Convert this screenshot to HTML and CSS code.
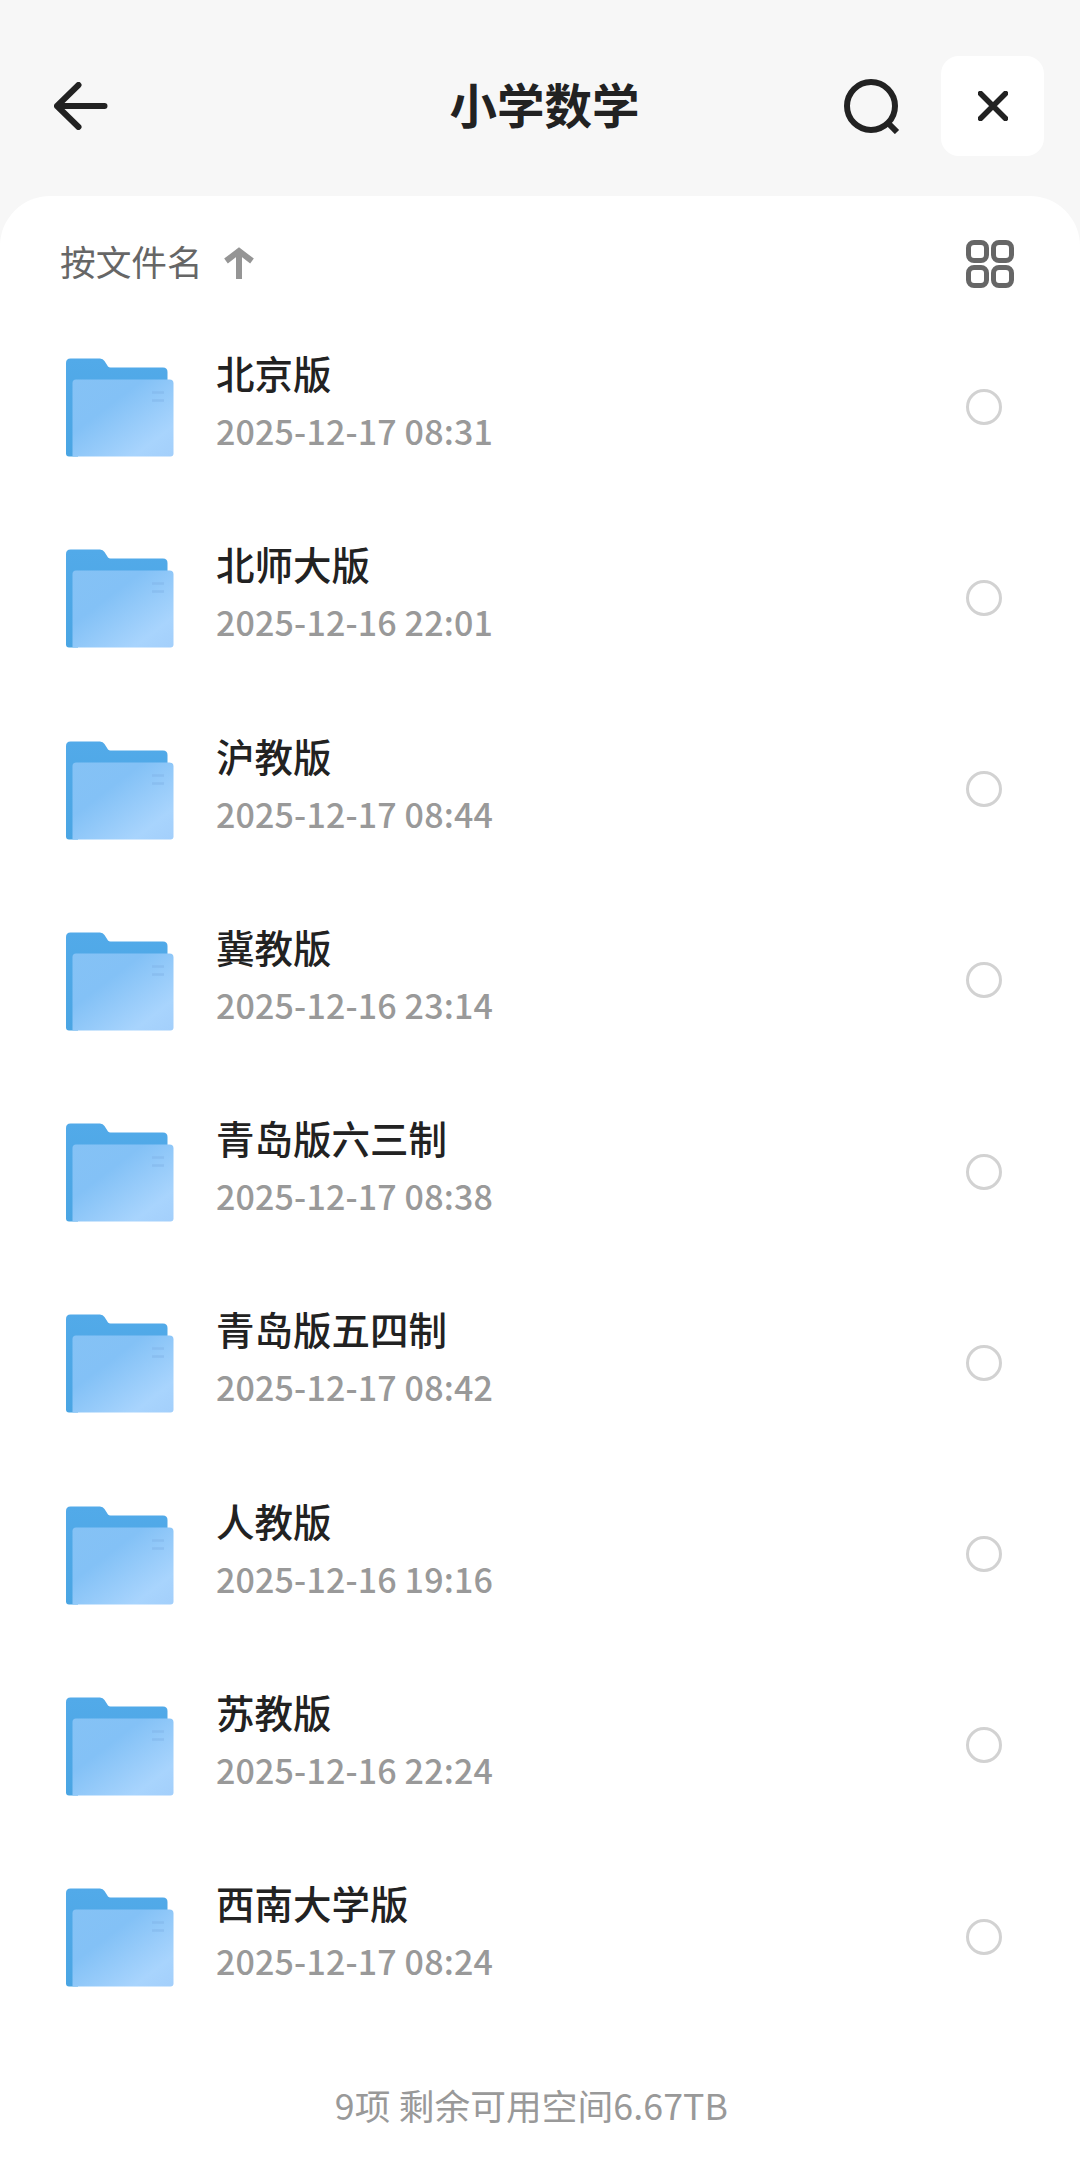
FILE: index.html
```
<!DOCTYPE html>
<html lang="zh-CN">
<head>
    <meta charset="UTF-8">
    <meta name="viewport" content="width=device-width, initial-scale=1.0">
    <title>小学数学</title>
    <link rel="stylesheet" href="styles.css">
</head>
<body>
    <!-- Shared icons -->
    <svg class="defs" width="0" height="0">
        <defs>
            <linearGradient id="folder-back" x1="0" y1="0" x2="0" y2="1">
                <stop offset="0" stop-color="#52aae9"/>
                <stop offset="1" stop-color="#4aa5e3"/>
            </linearGradient>
            <linearGradient id="folder-front" x1="0" y1="0" x2="1" y2="1">
                <stop offset="0" stop-color="#85c2f5"/>
                <stop offset="0.35" stop-color="#83c1f6"/>
                <stop offset="0.8" stop-color="#a8d4fd"/>
                <stop offset="1" stop-color="#a3cffb"/>
            </linearGradient>
            <symbol id="folder" viewBox="0 0 108 99">
                <path d="M0 5Q0 0.5 4.500 0.500H34Q37 0.500 38.500 3L42 8.500Q42.800 9.500 44.500 9.500H97Q101.500 9.500 101.500 14V60H12V98.500H3Q0 98.500 0 95.500Z" fill="url(#folder-back)"/>
                <path d="M10 21.500H103.500Q107.500 21.500 107.500 25.500V95.500Q107.500 98.500 104.500 98.500H6.500V25Q6.500 21.500 10 21.500Z" fill="url(#folder-front)"/>
                <path d="M86 34.500H98M86 42.500H98" stroke="#80b4e8" stroke-width="2.500" opacity="0.5"/>
            </symbol>
        </defs>
    </svg>

    <header class="header">
        <svg class="back" width="54" height="48" viewBox="0 0 54 48">
            <path d="M50.500 24H3M24.500 3L3 24L24.500 45"/>
        </svg>
        <h1>小学数学</h1>
        <div class="actions">
            <svg class="search" width="56" height="56" viewBox="0 0 56 56">
                <circle cx="27" cy="28" r="24"/>
                <path d="M44 45L53 54"/>
            </svg>
            <button class="close">
                <svg width="30" height="30" viewBox="0 0 30 30">
                    <path d="M2.500 2.500L27.500 27.500M27.500 2.500L2.500 27.500"/>
                </svg>
            </button>
        </div>
    </header>

    <main class="sheet">
        <div class="toolbar">
            <div class="sort">
                <span>按文件名</span>
                <svg width="30" height="32" viewBox="0 0 30 32">
                    <path d="M15 32V4M2 14L15 4L28 14"/>
                </svg>
            </div>
            <svg class="grid-icon" width="48" height="48" viewBox="0 0 48 48">
                <rect x="2.500" y="2.500" width="18" height="18" rx="5.500"/>
                <rect x="27.500" y="2.500" width="18" height="18" rx="5.500"/>
                <rect x="2.500" y="27.500" width="18" height="18" rx="5.500"/>
                <rect x="27.500" y="27.500" width="18" height="18" rx="5.500"/>
            </svg>
        </div>

        <ul class="file-list">
            <li class="file">
                <svg class="folder"><use href="#folder"/></svg>
                <div class="info">
                    <div class="name">北京版</div>
                    <div class="date">2025-12-17 08:31</div>
                </div>
                <span class="check"></span>
            </li>
            <li class="file">
                <svg class="folder"><use href="#folder"/></svg>
                <div class="info">
                    <div class="name">北师大版</div>
                    <div class="date">2025-12-16 22:01</div>
                </div>
                <span class="check"></span>
            </li>
            <li class="file">
                <svg class="folder"><use href="#folder"/></svg>
                <div class="info">
                    <div class="name">沪教版</div>
                    <div class="date">2025-12-17 08:44</div>
                </div>
                <span class="check"></span>
            </li>
            <li class="file">
                <svg class="folder"><use href="#folder"/></svg>
                <div class="info">
                    <div class="name">冀教版</div>
                    <div class="date">2025-12-16 23:14</div>
                </div>
                <span class="check"></span>
            </li>
            <li class="file">
                <svg class="folder"><use href="#folder"/></svg>
                <div class="info">
                    <div class="name">青岛版六三制</div>
                    <div class="date">2025-12-17 08:38</div>
                </div>
                <span class="check"></span>
            </li>
            <li class="file">
                <svg class="folder"><use href="#folder"/></svg>
                <div class="info">
                    <div class="name">青岛版五四制</div>
                    <div class="date">2025-12-17 08:42</div>
                </div>
                <span class="check"></span>
            </li>
            <li class="file">
                <svg class="folder"><use href="#folder"/></svg>
                <div class="info">
                    <div class="name">人教版</div>
                    <div class="date">2025-12-16 19:16</div>
                </div>
                <span class="check"></span>
            </li>
            <li class="file">
                <svg class="folder"><use href="#folder"/></svg>
                <div class="info">
                    <div class="name">苏教版</div>
                    <div class="date">2025-12-16 22:24</div>
                </div>
                <span class="check"></span>
            </li>
            <li class="file">
                <svg class="folder"><use href="#folder"/></svg>
                <div class="info">
                    <div class="name">西南大学版</div>
                    <div class="date">2025-12-17 08:24</div>
                </div>
                <span class="check"></span>
            </li>
        </ul>

        <footer class="summary">9项 剩余可用空间6.67TB</footer>
    </main>
</body>
</html>
```
FILE: styles.css
```
:root {
    --page-bg: #f7f7f7;
    --text: #222;
    --text-sort: #666;
    --text-muted: #999;
}

* {
    box-sizing: border-box;
}

body {
    margin: 0;
    min-height: 100vh;
    display: flex;
    flex-direction: column;
    background: var(--page-bg);
    color: var(--text);
    font-family: "Noto Sans CJK SC", sans-serif;
}

svg {
    display: block;
    flex: none;
    fill: none;
}

.defs {
    position: absolute;
}

/* Header */
.header {
    height: 196px;
    padding: 15px 36px 0 54px;
    display: grid;
    grid-template-columns: 1fr auto 1fr;
    align-items: center;
}

.back {
    stroke: var(--text);
    stroke-width: 6;
    stroke-linecap: round;
    stroke-linejoin: round;
}

h1 {
    margin: 0 9px 4px 0;
    font-size: 47.5px;
    line-height: 60px;
    font-weight: 700;
}

.actions {
    display: flex;
    align-items: center;
    justify-content: flex-end;
    gap: 41px;
}

.search {
    stroke: var(--text);
    stroke-width: 6;
}

.close {
    width: 103px;
    height: 100px;
    padding: 0;
    border: none;
    border-radius: 18px;
    background: white;
    display: flex;
    align-items: center;
    justify-content: center;
}

.close svg {
    stroke: var(--text);
    stroke-width: 5.5;
    stroke-linecap: round;
}

/* File sheet */
.sheet {
    flex: 1;
    background: white;
    border-radius: 50px 50px 0 0;
}

.toolbar {
    height: 116px;
    padding: 20px 66px 0 60px;
    display: flex;
    align-items: center;
    justify-content: space-between;
}

.sort {
    display: flex;
    align-items: center;
    gap: 21px;
    margin-bottom: 6px;
    color: var(--text-sort);
    font-size: 35.7px;
    line-height: 48px;
}

.sort svg {
    margin-top: 4px;
    stroke: #959595;
    stroke-width: 6;
}

.grid-icon {
    stroke: var(--text-sort);
    stroke-width: 5;
}

.file-list {
    list-style: none;
    margin: 0;
    padding: 0;
}

.file {
    height: 191.25px;
    padding: 0 78px 0 66px;
    display: flex;
    align-items: center;
}

.folder {
    width: 108px;
    height: 99px;
}

.info {
    flex: 1;
    margin-left: 42px;
    padding-bottom: 13px;
}

.name {
    font-size: 38.5px;
    line-height: 60px;
    font-weight: 500;
}

.date {
    color: var(--text-muted);
    font-size: 34px;
    line-height: 58px;
    font-weight: 500;
    letter-spacing: 0.15px;
}

.check {
    width: 36px;
    height: 36px;
    margin-bottom: 2px;
    border: 3px solid #d2d2d2;
    border-radius: 50%;
}

.summary {
    padding: 46px 17px 0 0;
    color: var(--text-muted);
    font-size: 35.7px;
    line-height: 52px;
    letter-spacing: 0.1px;
    text-align: center;
}
```
